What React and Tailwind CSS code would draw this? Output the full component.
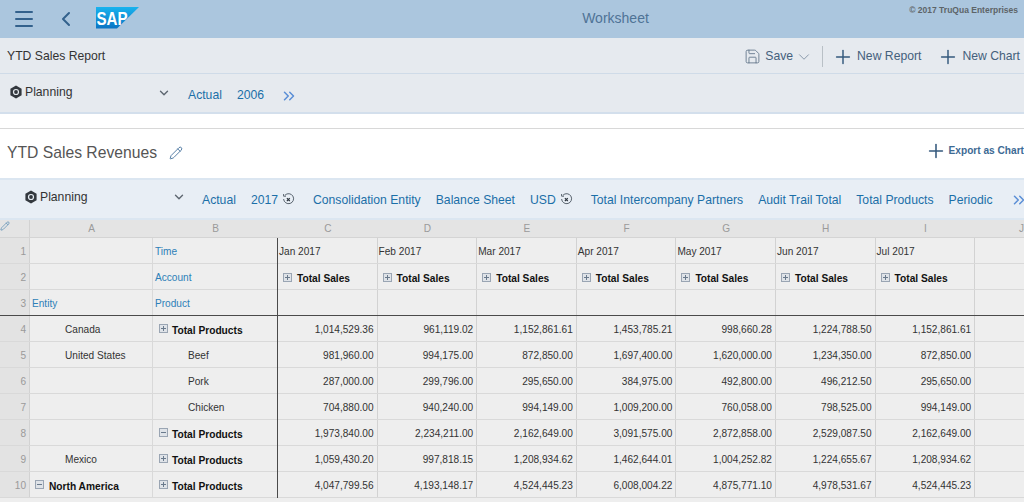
import { Menu, ChevronLeft, ChevronDown, ChevronsRight, Plus, Save, Pencil } from 'lucide-react';

const font = { fontFamily: '"Liberation Sans", Arial, sans-serif' };

const colLetters = ['C', 'D', 'E', 'F', 'G', 'H', 'I'];
const months = ['Jan 2017', 'Feb 2017', 'Mar 2017', 'Apr 2017', 'May 2017', 'Jun 2017', 'Jul 2017'];

const rows = [
  { n: 4, entity: 'Canada', product: 'Total Products', icon: 'plus', bold: true, values: ['1,014,529.36', '961,119.02', '1,152,861.61', '1,453,785.21', '998,660.28', '1,224,788.50', '1,152,861.61'] },
  { n: 5, entity: 'United States', product: 'Beef', values: ['981,960.00', '994,175.00', '872,850.00', '1,697,400.00', '1,620,000.00', '1,234,350.00', '872,850.00'] },
  { n: 6, product: 'Pork', values: ['287,000.00', '299,796.00', '295,650.00', '384,975.00', '492,800.00', '496,212.50', '295,650.00'] },
  { n: 7, product: 'Chicken', values: ['704,880.00', '940,240.00', '994,149.00', '1,009,200.00', '760,058.00', '798,525.00', '994,149.00'] },
  { n: 8, product: 'Total Products', icon: 'minus', bold: true, values: ['1,973,840.00', '2,234,211.00', '2,162,649.00', '3,091,575.00', '2,872,858.00', '2,529,087.50', '2,162,649.00'] },
  { n: 9, entity: 'Mexico', product: 'Total Products', icon: 'plus', bold: true, values: ['1,059,430.20', '997,818.15', '1,208,934.62', '1,462,644.01', '1,004,252.82', '1,224,655.67', '1,208,934.62'] },
  { n: 10, entity: 'North America', entityBold: true, product: 'Total Products', icon: 'plus', bold: true, values: ['4,047,799.56', '4,193,148.17', '4,524,445.23', '6,008,004.22', '4,875,771.10', '4,978,531.67', '4,524,445.23'] },
];

function Toggle({ type }) {
  return (
    <svg width="9" height="9" viewBox="0 0 9 9" className="shrink-0">
      <rect x="0.5" y="0.5" width="8" height="8" fill="#dfe3e8" stroke="#9aa5b3" />
      <path d={type === 'plus' ? 'M2 4.5h5M4.5 2v5' : 'M2 4.5h5'} stroke="#6a7a8c" strokeWidth="1" />
    </svg>
  );
}

function PlanningIcon({ bg }) {
  return (
    <svg width="14" height="14" viewBox="0 0 14 14" className="shrink-0">
      <path d="M7 0.6l5.6 3.2v6.4L7 13.4l-5.6-3.2V3.8z" fill="#33383e" />
      <circle cx="7" cy="7" r="3.1" fill={bg} />
      <circle cx="7" cy="7" r="1.9" fill="#33383e" />
    </svg>
  );
}

function ClearIcon() {
  return (
    <svg width="13" height="13" viewBox="0 0 13 13" className="shrink-0">
      <path d="M3 2.2A5 5 0 1 1 1.6 6" fill="none" stroke="#4a5560" strokeWidth="0.9" />
      <path d="M1.6 1v2.2h2.4" fill="none" stroke="#4a5560" strokeWidth="0.9" />
      <path d="M4.9 5.1l2.9 2.9M7.8 5.1L4.9 8" stroke="#2f3740" strokeWidth="1.2" />
    </svg>
  );
}

function SapLogo() {
  return (
    <svg width="43" height="22" viewBox="0 0 43 22" className="shrink-0">
      <defs>
        <linearGradient id="sapBlue" x1="0" y1="0" x2="0" y2="1">
          <stop offset="0" stopColor="#19b3ee" />
          <stop offset="1" stopColor="#0a74c4" />
        </linearGradient>
      </defs>
      <polygon points="0,0 43,0 21,21.5 0,21.5" fill="url(#sapBlue)" />
      <text x="0.5" y="17.5" fill="#fff" fontSize="18" fontWeight="700" textLength="31" lengthAdjust="spacingAndGlyphs" style={font}>SAP</text>
    </svg>
  );
}

function FilterLink({ children, clear, className = '' }) {
  return (
    <span className={`flex items-center gap-[4px] text-[#1b6fa8] whitespace-nowrap ${className}`}>
      {children}
      {clear && <ClearIcon />}
    </span>
  );
}

const gutter = 'w-[30px] shrink-0 bg-[#e3e3e3] border-r border-[#d2d2d2] text-right pr-[3px] text-[#9a9a9a]';
const colA = 'w-[123px] shrink-0 border-r border-[#d9d9d9]';
const colB = "w-[125px] shrink-0 border-r border-[#4a4a4a] relative after:content-[''] after:absolute after:right-[-1px] after:top-0 after:bottom-[-1px] after:w-px after:bg-[#4a4a4a]";
const colN = 'w-[99.6px] shrink-0 border-r border-[#d2d2d2]';

export default function App() {
  return (
    <div className="w-[1024px] h-[502px] overflow-hidden bg-white flex flex-col" style={font}>
      {/* shell header */}
      <div className="h-[38px] shrink-0 bg-[#abc6de] flex items-center relative">
        <Menu size={24} strokeWidth={2} className="ml-[12px] text-[#33618c]" />
        <ChevronLeft size={24} strokeWidth={2} className="ml-[18px] text-[#33618c]" />
        <div className="ml-[18px] -mt-[2px]"><SapLogo /></div>
        <div className="absolute left-0 right-0 top-[10px] text-center text-[14px] leading-[16px] text-[#4f7396] pl-[207px]">Worksheet</div>
        <div className="absolute right-[6px] top-[4px] text-[8.5px] leading-[12px] font-bold text-[#5d6468]">© 2017 TruQua Enterprises</div>
      </div>

      {/* report toolbar */}
      <div className="h-[36px] shrink-0 bg-[#e6eaef] border-b border-[#cfdbe8] flex items-center justify-between pl-[7px] pr-[4px] pt-[2px] text-[12.2px]">
        <span className="text-[#333]">YTD Sales Report</span>
        <div className="flex items-center text-[#44607c]">
          <Save size={17} strokeWidth={1.2} className="text-[#5f7388]" />
          <span className="ml-[4px]">Save</span>
          <ChevronDown size={18} strokeWidth={1} className="ml-[2px] text-[#6b7f94]" />
          <span className="ml-[9px] w-px h-[21px] bg-[#b9c0c6]" />
          <Plus size={22} strokeWidth={1.6} className="ml-[9px] text-[#35597d]" />
          <span className="ml-[3px]">New Report</span>
          <Plus size={22} strokeWidth={1.6} className="ml-[16px] text-[#35597d]" />
          <span className="ml-[3px]">New Chart</span>
        </div>
      </div>

      {/* saved filter */}
      <div className="h-[40px] shrink-0 bg-[#e6eaef] border-b-2 border-[#d3dfec] flex items-center text-[12.2px] pl-[9px]">
        <span className="w-[148px] shrink-0 flex items-center gap-[2px] -mt-[1px] text-[#333]">
          <PlanningIcon bg="#e6eaef" />
          Planning
        </span>
        <ChevronDown size={14} strokeWidth={2.4} className="text-[#5d6670] -mt-[1px] shrink-0" />
        <FilterLink className="ml-[17px] mt-[5px]">Actual</FilterLink>
        <FilterLink className="ml-[15px] mt-[5px]">2006</FilterLink>
        <ChevronsRight size={18} strokeWidth={2} className="ml-[16px] mt-[5px] text-[#5a8ed6]" />
      </div>

      <div className="h-[15px] shrink-0 bg-white border-b border-[#d8d8d8]" />

      {/* section title */}
      <div className="h-[49px] shrink-0 bg-white flex items-center justify-between pl-[7px]">
        <div className="flex items-center -mt-[1px]">
          <span className="text-[15.7px] text-[#555]">YTD Sales Revenues</span>
          <Pencil size={14} strokeWidth={1.5} className="ml-[12px] text-[#3f6d99]" />
        </div>
        <div className="flex items-center -mt-[5px] text-[10.15px] font-bold text-[#3d6a94] whitespace-nowrap">
          <Plus size={22} strokeWidth={1.7} className="text-[#35597d]" />
          <span className="ml-[2px]">Export as Chart</span>
        </div>
      </div>

      {/* active filter */}
      <div className="h-[42px] shrink-0 bg-[#e8eef5] border-y-2 border-[#dbe6f1] flex items-center text-[12.2px] pl-[24px]">
        <span className="w-[148px] shrink-0 flex items-center gap-[2px] -mt-[4px] text-[#333]">
          <PlanningIcon bg="#e8eef5" />
          Planning
        </span>
        <ChevronDown size={14} strokeWidth={2.4} className="text-[#5d6670] -mt-[4px] shrink-0" />
        <FilterLink className="ml-[16px] mt-[2px]">Actual</FilterLink>
        <FilterLink clear className="ml-[15px] mt-[2px]">2017</FilterLink>
        <FilterLink className="ml-[18px] mt-[2px]">Consolidation Entity</FilterLink>
        <FilterLink className="ml-[15px] mt-[2px]">Balance Sheet</FilterLink>
        <FilterLink clear className="ml-[15px] mt-[2px]">USD</FilterLink>
        <FilterLink className="ml-[18px] mt-[2px]">Total Intercompany Partners</FilterLink>
        <FilterLink className="ml-[15px] mt-[2px]">Audit Trail Total</FilterLink>
        <FilterLink className="ml-[15px] mt-[2px]">Total Products</FilterLink>
        <FilterLink className="ml-[15px] mt-[2px]">Periodic</FilterLink>
        <ChevronsRight size={18} strokeWidth={2} className="ml-[17px] mt-[2px] text-[#5a8ed6] shrink-0" />
      </div>

      {/* worksheet */}
      <div className="flex-1 min-h-0 bg-[#eeeeee] text-[10.1px] text-[#333]">
        <div className="h-[18px] flex bg-[#e4e4e4] border-b border-[#d4d4d4] text-[#9a9a9a] leading-[17px] text-center">
          <div className="w-[30px] shrink-0 border-r border-[#d2d2d2] flex items-center justify-center">
            <Pencil size={10} strokeWidth={1.4} className="text-[#3d7aa8] -mt-[6px] -ml-[20px]" />
          </div>
          <div className="w-[123px] shrink-0">A</div>
          <div className="w-[125px] shrink-0">B</div>
          {colLetters.map((c) => <div key={c} className="w-[99.6px] shrink-0">{c}</div>)}
          <div className="flex-1 text-right pr-0">J</div>
        </div>

        {/* rows 1-3 */}
        <div className="h-[26px] flex border-b border-[#d9d9d9] leading-[27px]">
          <div className={gutter}>1</div>
          <div className={colA} />
          <div className={`${colB} pl-[2px] text-[#2d7fb8]`}>Time</div>
          {months.map((m) => <div key={m} className={`${colN} pl-[1px]`}>{m}</div>)}
        </div>
        <div className="h-[26px] flex border-b border-[#d9d9d9] leading-[27px]">
          <div className={gutter}>2</div>
          <div className={colA} />
          <div className={`${colB} pl-[2px] text-[#2d7fb8]`}>Account</div>
          {months.map((m) => (
            <div key={m} className={`${colN} pl-[5px] pt-[2px] flex items-center gap-[5px] font-bold text-[10.2px] text-[#111]`}>
              <Toggle type="plus" />
              <span className="mt-[1px]">Total Sales</span>
            </div>
          ))}
        </div>
        <div className="h-[26px] flex border-b border-[#4a4a4a] leading-[27px]">
          <div className={gutter}>3</div>
          <div className={`${colA} pl-[2px] text-[#2d7fb8]`}>Entity</div>
          <div className={`${colB} pl-[2px] text-[#2d7fb8]`}>Product</div>
          {months.map((m) => <div key={m} className={colN} />)}
        </div>

        {rows.map((r) => (
          <div key={r.n} className="h-[26px] flex border-b border-[#d9d9d9] leading-[27px]">
            <div className={gutter}>{r.n}</div>
            {r.entityBold ? (
              <div className={`${colA} pl-[5px] flex items-center gap-[5px] font-bold text-[10.2px] text-[#111]`}>
                <Toggle type="minus" />
                <span className="mt-[3px]">{r.entity}</span>
              </div>
            ) : (
              <div className={`${colA} pl-[35px]`}>{r.entity}</div>
            )}
            {r.bold ? (
              <div className={`${colB} pl-[6px] flex items-center gap-[4px] font-bold text-[10.2px] text-[#111]`}>
                <Toggle type={r.icon} />
                <span className="mt-[3px]">{r.product}</span>
              </div>
            ) : (
              <div className={`${colB} pl-[35px]`}>{r.product}</div>
            )}
            {r.values.map((v, i) => (
              <div key={i} className={`${colN} text-right pr-[3px]`}>{v}</div>
            ))}
          </div>
        ))}
      </div>
    </div>
  );
}
